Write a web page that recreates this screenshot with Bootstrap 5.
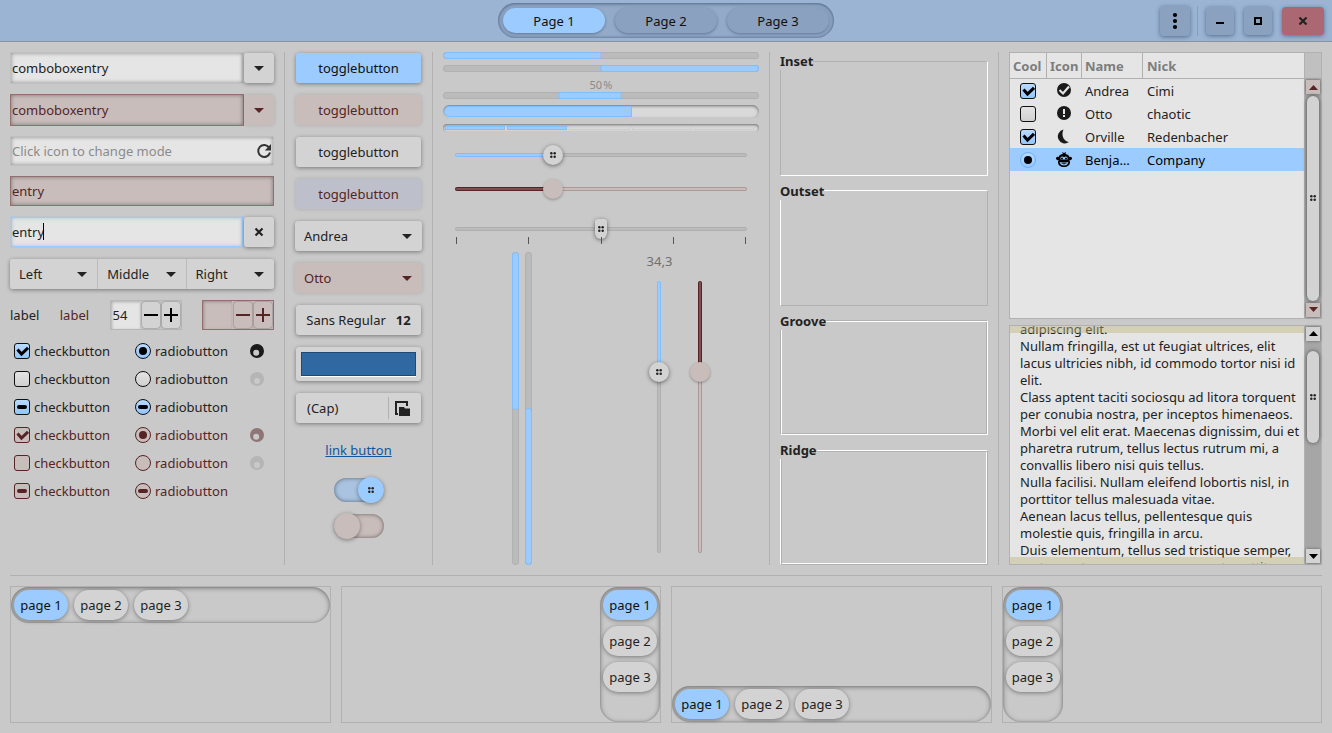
<!DOCTYPE html>
<html lang="en">
<head>
<meta charset="utf-8">
<meta name="viewport" content="width=device-width, initial-scale=1">
<title>Widget Factory</title>
<link href="https://cdn.jsdelivr.net/npm/bootstrap@5.3.0/dist/css/bootstrap.min.css" rel="stylesheet">
<style>
:root{--bg:#c9c9c9;--line:#b1b1b1;--acc:#9cccff;--accline:#80bfff;--base:#e5e5e5;--btn:#d3d3d3;--fg:#222;--dis:#c8bdbb;--disfg:#562424;--disline:#936f6f;
 --check:url("data:image/svg+xml,%3Csvg xmlns='http://www.w3.org/2000/svg' viewBox='0 0 14 14'%3E%3Cpath d='M2.500 5.500l4 4.500L13 3.800' fill='none' stroke='%23000' stroke-width='3'/%3E%3C/svg%3E");
 --checkoff:url("data:image/svg+xml,%3Csvg xmlns='http://www.w3.org/2000/svg' viewBox='0 0 14 14'%3E%3Cpath d='M2.500 5.500l4 4.500L13 3.800' fill='none' stroke='%23562424' stroke-width='3'/%3E%3C/svg%3E");
 --dash:url("data:image/svg+xml,%3Csvg xmlns='http://www.w3.org/2000/svg' viewBox='0 0 14 14'%3E%3Crect x='2' y='5' width='10' height='4' rx='2'/%3E%3C/svg%3E");
 --dashoff:url("data:image/svg+xml,%3Csvg xmlns='http://www.w3.org/2000/svg' viewBox='0 0 14 14'%3E%3Crect x='2' y='5' width='10' height='4' rx='2' fill='%23562424'/%3E%3C/svg%3E");
 --dot:url("data:image/svg+xml,%3Csvg xmlns='http://www.w3.org/2000/svg' viewBox='0 0 14 14'%3E%3Ccircle cx='7' cy='7' r='4'/%3E%3C/svg%3E");
 --dotoff:url("data:image/svg+xml,%3Csvg xmlns='http://www.w3.org/2000/svg' viewBox='0 0 14 14'%3E%3Ccircle cx='7' cy='7' r='4' fill='%23562424'/%3E%3C/svg%3E");
 --arrow:url("data:image/svg+xml,%3Csvg xmlns='http://www.w3.org/2000/svg' viewBox='0 0 10 5'%3E%3Cpath d='M0 0h10L5 5z' fill='%23222'/%3E%3C/svg%3E");
 --arrowoff:url("data:image/svg+xml,%3Csvg xmlns='http://www.w3.org/2000/svg' viewBox='0 0 10 5'%3E%3Cpath d='M0 0h10L5 5z' fill='%23562424'/%3E%3C/svg%3E");
 --grip:url("data:image/svg+xml,%3Csvg xmlns='http://www.w3.org/2000/svg' viewBox='0 0 6 6'%3E%3Cg fill='%23222'%3E%3Ccircle cx='1.300' cy='1.300' r='1.250'/%3E%3Ccircle cx='4.700' cy='1.300' r='1.250'/%3E%3Ccircle cx='1.300' cy='4.700' r='1.250'/%3E%3Ccircle cx='4.700' cy='4.700' r='1.250'/%3E%3C/g%3E%3C/svg%3E")}
body{font:13px/18px "Noto Sans",sans-serif;color:var(--fg);background:var(--bg)}
.page{min-height:100vh}
input,button,select,textarea{font:inherit;color:inherit}
svg{display:block}

/* title bar */
.titlebar{height:42px;background:#9bb4d4;border-bottom:1px solid #8d9299;display:grid;grid-template-columns:1fr auto 1fr;color:#101010}
.switcher{height:35px;padding:0 5px;gap:10px;border-radius:18px;background:#93abc9;box-shadow:inset 0 1px 4px rgba(30,50,80,.4),inset 0 0 2px 1px rgba(80,100,130,.4)}
.switcher .btn{width:102px;height:25px;padding:0;border:0;border-radius:13px;font:inherit;color:#101010;background:#8aa1bf;box-shadow:0 1px 3px rgba(30,50,80,.45)}
.switcher .btn.active{background:var(--acc)}
.winbtns{gap:10px;padding-right:8px}
.winbtns .btn{width:28px;height:28px;padding:0;border:0;border-radius:4px;color:#000;background:#8aa1bf;box-shadow:0 1px 4px rgba(20,40,70,.5);display:grid;place-items:center}
.winbtns .menubtn{width:30px;height:30px}
.winbtns .closebtn{width:42px;background:#ac6872;color:#222}
.vline{width:1px;background:var(--line)}
.winbtns .vline{height:30px;background:#869dbb;margin:0 -2px 0 -3px}

/* main grid */
.board{flex:1;display:grid;gap:10px;padding:10px;grid-template-columns:minmax(0,264fr) 1px minmax(0,127fr) 1px minmax(0,316fr) 1px minmax(0,208fr) 1px minmax(0,313fr);grid-template-rows:minmax(513px,1fr)}
.stack{display:flex;flex-direction:column;min-width:0}
.wbtn{height:30px;padding:0;border:0;border-radius:3px;background:var(--btn);color:var(--fg);font:inherit;box-shadow:0 1px 4px rgba(0,0,0,.4);display:flex;align-items:center;justify-content:center;white-space:nowrap}
.wbtn:hover{background:#dadada}
.wbtn.active{background:var(--acc);color:#101010}
.wbtn:disabled{opacity:1;background:var(--dis);color:var(--disfg);box-shadow:0 0 4px rgba(0,0,0,.15)}
.wbtn.active:disabled{background:#bdc0cb}
.entry{width:100%;min-width:0;height:30px;padding:0 1px;border:1px solid #c0c0c0;border-radius:0;background:var(--base);box-shadow:inset 0 0 4px rgba(0,0,0,.4)}
.entry::placeholder{color:#8b8b8b}
.entry.tall{height:32px}
.entry:disabled{background:var(--dis);color:var(--disfg);border-color:var(--disline);opacity:1}
.entry.focus{border-color:#bcc6d0;box-shadow:inset 0 0 0 1px var(--acc),inset 0 0 4px rgba(60,120,200,.5);outline:0}
.combo .wbtn{width:30px;flex:none}
.pick{appearance:none;width:100%;justify-content:start;padding:0 28px 0 9px;background:var(--btn) var(--arrow) no-repeat right 10px center/10px 5px}
.pick:disabled{background:var(--dis) var(--arrowoff) no-repeat right 10px center/10px 5px}
.trio .pick{border-radius:0;border-right:1px solid #bbb;box-shadow:none}
.trio .pick:first-child{border-radius:3px 0 0 3px}
.trio .pick:last-child{border-right:0;border-radius:0 3px 3px 0}
.trio{border-radius:3px;box-shadow:0 1px 4px rgba(0,0,0,.4);margin:1px 0}
.caret{position:absolute;left:33px;top:7px;width:1px;height:17px;background:#000}
.endicon{position:absolute;right:2px;top:7px}
.offtext{color:var(--disfg)}
.spin{height:30px;width:72px;padding:0 1px 0 0;border:1px solid #b8b8b8;background:var(--bg);gap:2px;align-items:center;display:flex}
.spin input{flex:1;min-width:0;height:28px;border:0;padding:0 2px;background:var(--base);box-shadow:inset 1px 1px 3px rgba(0,0,0,.25)}
.spin .wbtn{width:18px;height:26px;box-shadow:0 0 2px rgba(0,0,0,.5)}
.spin.off{background:var(--dis);border-color:var(--disline)}
.spin.off input{background:var(--dis)}
.tick{appearance:none;flex:none;width:16px;height:16px;margin:0;border:1px solid #111;border-radius:3px;background:linear-gradient(#e4e4e4,#d0d0d0)}
.tick[type=radio]{border-radius:50%}
.tick:checked,.tick.mixed{background:var(--dash) center/14px,linear-gradient(#b8daff,#93c6ff)}
.tick:checked{background-image:var(--check),linear-gradient(#b8daff,#93c6ff)}
.tick[type=radio]:checked{background-image:var(--dot),linear-gradient(#b8daff,#93c6ff)}
.tick:disabled{border-color:var(--disfg);background:var(--dis)}
.tick.mixed:disabled{background:var(--dashoff) center/14px,var(--dis)}
.tick:checked:disabled{background:var(--checkoff) center/14px,var(--dis)}
.tick[type=radio]:checked:disabled{background:var(--dotoff) center/14px,var(--dis)}
.tick.sel{border-color:#6cb0fb}
.checks{display:grid;grid-template-columns:121fr 114fr 25fr;row-gap:6px;padding-left:4px}
.checks label,.checks span{height:22px;display:flex;align-items:center;gap:4px}

/* buttons column */
.buttons{gap:12px;padding-top:1px}
.inset1{margin:0 1px}
.fontbtn{gap:5px;padding:0 11px}
.colorwell{width:100%;height:100%;border:1px solid #1f4a78;background:#3068a2;box-shadow:0 1px #fff;padding:0;appearance:none}
.colorwell::-webkit-color-swatch-wrapper{padding:0}
.colorwell::-webkit-color-swatch{border:0}
.linkbtn{height:30px;line-height:30px;color:#12559b}
.toggle{appearance:none;width:50px;height:24px;margin:1px auto;border-radius:12px;background:#a9c3e0;box-shadow:inset 0 0 4px rgba(0,0,0,.5);display:flex;align-items:center;justify-content:flex-end}
.toggle::before{content:"";width:26px;height:26px;flex:none;border-radius:50%;background:var(--grip) center/6px no-repeat var(--acc);box-shadow:0 1px 4px rgba(0,0,0,.4)}
.toggle:disabled{justify-content:flex-start;background:var(--dis)}
.toggle:disabled::before{background:var(--dis)}

/* bars and scales */
.bar7{height:7px;border:1px solid var(--line);background:#bbb;border-radius:3px;overflow:visible;font-size:inherit}
.bar7 .progress-bar{background:var(--acc);outline:1px solid var(--accline);border-radius:2px}
.bar7.upright{width:7px;height:auto;flex-direction:column}
.level{border-radius:7px;background:#d9d9d9;box-shadow:inset 0 1px 3px rgba(0,0,0,.5);padding:1px}
.level .fillbar{height:100%;background:var(--acc);border:1px solid var(--accline);border-radius:6px 0 0 6px}
.blocks{display:flex;gap:2px;padding:2px 5px 2px 2px}
.blocks i{flex:1;border:1px solid #cdcdcd}
.blocks i.on{background:var(--acc);border-color:var(--accline)}
.scale{--c:var(--acc);--cl:var(--accline);--t:#bbb;--tl:#afafaf;--dir:to right;appearance:none;background:none;width:100%;height:20px;margin:0;display:block}
.scale::-webkit-slider-runnable-track{box-sizing:border-box;height:4px;border:1px solid transparent;border-radius:2px;background:linear-gradient(var(--dir),var(--c) var(--fill),var(--t) var(--fill)) padding-box,linear-gradient(var(--dir),var(--cl) var(--fill),var(--tl) var(--fill)) border-box}
.scale::-webkit-slider-thumb{appearance:none;width:20px;height:20px;margin-top:-9px;border:0;border-radius:50%;background:var(--grip) center/6px no-repeat var(--btn);box-shadow:0 1px 4px rgba(0,0,0,.5)}
.scale:disabled{--c:#7a5050;--cl:#562424;--t:#c8bdbb;--tl:#ad9898}
.scale:disabled::-webkit-slider-thumb{background:var(--dis);box-shadow:0 1px 3px rgba(0,0,0,.3)}
.scale.marks::-webkit-slider-thumb{width:12px;border-radius:3px 3px 6px 6px}
.scale.tallscale{--dir:to bottom;writing-mode:vertical-lr;width:20px;height:auto;flex:1;min-height:0}
.scale.tallscale::-webkit-slider-runnable-track{width:4px;height:100%}
.scale.tallscale::-webkit-slider-thumb{margin:0 0 0 -9px}
.ticks{display:flex;justify-content:space-between;padding:0 1px}
.ticks i{width:1px;height:7px;background:#555}
.scales{gap:18px;padding:0 3px 12px 0}
.dim{color:#707070}
.tiny{font-size:11px;line-height:14px;color:#8a8a8a}

/* frames */
.frames{gap:6px}
.frames fieldset{flex:1;border:1px solid}
.frames legend{float:none;width:auto;margin:0 0 0 -1px;font-size:13px;line-height:18px;font-weight:700;background:var(--bg)}
.frames .f-in{border-color:var(--line) #fff #fff var(--line)}
.frames .f-out{border-color:#fff var(--line) var(--line) #fff}
.frames .f-groove{border-color:var(--line) #fff #fff var(--line);box-shadow:inset 1px 1px #fff,inset -1px -1px var(--line)}
.frames .f-ridge{border-color:#fff var(--line) var(--line) #fff;box-shadow:inset 1px 1px var(--line),inset -1px -1px #fff}

/* list and text */
.view{border:1px solid var(--line);background:var(--base);display:flex;min-height:0}
.people{table-layout:fixed;width:100%;margin:0;border-collapse:separate;border-spacing:0}
.people th{height:26px;padding:0 3px;border-right:1px solid var(--line);border-bottom:1px solid var(--line);color:#7d7d7d;font-weight:700;white-space:nowrap}
.people th:last-child{border-right:0;padding-left:4px}
.people td{height:23px;padding:0 10px 0 3px;line-height:18px;vertical-align:middle;white-space:nowrap;overflow:hidden;text-overflow:ellipsis}
.people td:nth-child(n+4){padding-left:4px}
.people tr.cur td{background:var(--acc);color:#000}
.people td .tick,.people td svg{display:block;margin:0 auto}
.people td:nth-child(-n+2){padding:0 1px 0 0}
.sbar{width:17px;flex:none;background:#a6a6a6;border-left:1px solid var(--line);padding:1px;display:flex;flex-direction:column;gap:1px}
.sbar .wbtn{width:14px;height:14px;flex:none;border-radius:0;box-shadow:0 0 3px rgba(0,0,0,.4)}
.trough{flex:1;display:flex;flex-direction:column;padding:1px}
.thumb{border-radius:6px;background:var(--grip) center/6px no-repeat var(--btn);box-shadow:0 0 4px rgba(0,0,0,.55)}
.stub{height:26px;background:#c0c0c0;border-left:1px solid var(--line);border-bottom:1px solid var(--line)}
.prose{flex:1;width:100%;min-width:0;resize:none;overflow:hidden;border:0;outline:0;background:none;padding:0 0 0 10px;line-height:17px;display:block}
.edge{position:absolute;left:0;right:0;height:7px;background:rgba(190,182,125,.45)}

/* notebooks */
.books{display:grid;grid-template-columns:repeat(4,minmax(0,1fr));gap:10px;margin:0 10px 10px;padding-top:10px;border-top:1px solid var(--line)}
.book{height:137px;border:1px solid var(--line);display:flex}
.tabs{padding:3px;gap:6px;display:flex;border-radius:18px;box-shadow:inset 0 1px 5px rgba(0,0,0,.42),inset 0 0 1px 1px rgba(0,0,0,.06)}
.tabs .wbtn{width:54px;border-radius:15px}
</style>
</head>
<body>
<div class="page d-flex flex-column">
<header class="titlebar align-items-center">
  <span></span>
  <nav class="switcher d-flex align-items-center" aria-label="Pages">
    <button class="btn active">Page 1</button><button class="btn">Page 2</button><button class="btn">Page 3</button>
  </nav>
  <div class="winbtns d-flex align-items-center justify-content-end">
    <button class="btn menubtn" aria-label="Menu"><svg width="6" height="18" viewBox="0 0 6 18"><circle cx="3" cy="3" r="2.1"/><circle cx="3" cy="9" r="2.1"/><circle cx="3" cy="15" r="2.1"/></svg></button>
    <span class="vline"></span>
    <button class="btn" aria-label="Minimize"><svg width="10" height="10"><path d="M1 6h8v2H1z"/></svg></button>
    <button class="btn" aria-label="Maximize"><svg width="10" height="10"><path d="M2 2h6v6H2z" fill="none" stroke="#000" stroke-width="2"/></svg></button>
    <button class="btn closebtn" aria-label="Close"><svg width="10" height="10"><path d="M1.5 1.5l7 7m0-7l-7 7" stroke="#222" stroke-width="2.2"/></svg></button>
  </div>
</header>

<main class="board">
  <section class="stack" style="gap:10px">
    <div class="combo d-flex align-items-center"><input class="entry tall" value="comboboxentry" aria-label="Combo entry"><button class="wbtn" aria-label="Open"><svg width="10" height="5"><path d="M0 0h10L5 5z" fill="#222"/></svg></button></div>
    <div class="combo d-flex align-items-center"><input class="entry tall" value="comboboxentry" disabled aria-label="Disabled combo entry"><button class="wbtn" disabled aria-label="Open"><svg width="10" height="5"><path d="M0 0h10L5 5z" fill="#562424"/></svg></button></div>
    <div class="position-relative"><input class="entry d-block" placeholder="Click icon to change mode" aria-label="Mode"><svg class="endicon" width="16" height="16" viewBox="0 0 16 16"><path d="M13.2 4.6A6 6 0 1 0 14 9.6" fill="none" stroke="#333" stroke-width="2"/><path d="M15 1v6.4H8.8z" fill="#333"/></svg></div>
    <input class="entry" value="entry" disabled aria-label="Disabled entry">
    <div class="combo d-flex align-items-center position-relative"><input class="entry tall focus" value="entry" aria-label="Entry"><span class="caret"></span><button class="wbtn" aria-label="Clear"><svg width="10" height="10"><path d="M1.5 1.5l7 7m0-7l-7 7" stroke="#222" stroke-width="2.2"/></svg></button></div>
    <div class="trio d-flex">
      <select class="wbtn pick" aria-label="Left"><option>Left</option></select><select class="wbtn pick" aria-label="Middle"><option>Middle</option></select><select class="wbtn pick" aria-label="Right"><option>Right</option></select>
    </div>
    <div class="d-flex align-items-center justify-content-between">
      <label for="sp1">label</label><label for="sp2" class="offtext">label</label>
      <div class="spin"><input id="sp1" value="54"><button class="wbtn" aria-label="Less"><svg width="14" height="14"><path d="M0 6h14v2H0z"/></svg></button><button class="wbtn" aria-label="More"><svg width="14" height="14"><path d="M0 6h14v2H0zM6 0h2v14H6z"/></svg></button></div>
      <div class="spin off"><input id="sp2" disabled><button class="wbtn" disabled aria-label="Less"><svg width="14" height="14" fill="#562424"><path d="M0 6h14v2H0z"/></svg></button><button class="wbtn" disabled aria-label="More"><svg width="14" height="14" fill="#562424"><path d="M0 6h14v2H0zM6 0h2v14H6z"/></svg></button></div>
    </div>
    <div class="checks">
      <label><input class="tick" type="checkbox" checked>checkbutton</label><label><input class="tick" type="radio" name="a" checked>radiobutton</label><span><svg width="16" height="16" fill="#1a1a1a"><path fill-rule="evenodd" d="M8 1a7 7 0 1 0 0 14A7 7 0 0 0 8 1zM7.2 6.8a3 3 0 1 1 0 6 3 3 0 0 1 0-6z"/></svg></span>
      <label><input class="tick" type="checkbox">checkbutton</label><label><input class="tick" type="radio" name="a">radiobutton</label><span><svg width="16" height="16" fill="#b5b5b5"><path fill-rule="evenodd" d="M8 1a7 7 0 1 0 0 14A7 7 0 0 0 8 1zM8 7a3 3 0 1 1 0 6 3 3 0 0 1 0-6z"/></svg></span>
      <label><input class="tick mixed" type="checkbox">checkbutton</label><label><input class="tick mixed" type="radio" name="b">radiobutton</label><span></span>
      <label class="offtext"><input class="tick" type="checkbox" checked disabled>checkbutton</label><label class="offtext"><input class="tick" type="radio" name="c" checked disabled>radiobutton</label><span><svg width="16" height="16" fill="#8f7575"><path fill-rule="evenodd" d="M8 1a7 7 0 1 0 0 14A7 7 0 0 0 8 1zM7.2 6.8a3 3 0 1 1 0 6 3 3 0 0 1 0-6z"/></svg></span>
      <label class="offtext"><input class="tick" type="checkbox" disabled>checkbutton</label><label class="offtext"><input class="tick" type="radio" name="c" disabled>radiobutton</label><span><svg width="16" height="16" fill="#b5b5b5"><path fill-rule="evenodd" d="M8 1a7 7 0 1 0 0 14A7 7 0 0 0 8 1zM8 7a3 3 0 1 1 0 6 3 3 0 0 1 0-6z"/></svg></span>
      <label class="offtext"><input class="tick mixed" type="checkbox" disabled>checkbutton</label><label class="offtext"><input class="tick mixed" type="radio" name="d" disabled>radiobutton</label><span></span>
    </div>
  </section>
  <span class="vline"></span>

  <section class="stack buttons">
    <button class="wbtn inset1 active">togglebutton</button>
    <button class="wbtn inset1" disabled>togglebutton</button>
    <button class="wbtn inset1">togglebutton</button>
    <button class="wbtn inset1 active" disabled>togglebutton</button>
    <select class="wbtn pick" aria-label="Name"><option>Andrea</option></select>
    <select class="wbtn pick" disabled aria-label="Disabled name"><option>Otto</option></select>
    <button class="wbtn inset1 fontbtn"><span>Sans Regular</span><span class="vline align-self-stretch my-1"></span><b>12</b></button>
    <div class="wbtn inset1" style="height:34px;padding:5px"><input class="colorwell" type="color" value="#3068a2" aria-label="Colour"></div>
    <button class="wbtn inset1 fontbtn"><span class="flex-fill text-start">(Cap)</span><span class="vline align-self-stretch my-1"></span><svg width="16" height="16" fill="#222"><path d="M1 1h13v5h-2V3H3v10h1v2H1z"/><path d="M5 7h5l1 1.500h5V16H5z"/></svg></button>
    <a href="#" class="linkbtn text-center">link button</a>
    <div class="stack" style="gap:10px"><input class="toggle" type="checkbox" role="switch" checked aria-label="Switch"><input class="toggle" type="checkbox" role="switch" disabled aria-label="Disabled switch"></div>
  </section>
  <span class="vline"></span>

  <section class="stack">
    <div class="progress bar7"><div class="progress-bar" style="width:50%"></div></div>
    <div class="progress bar7" style="margin-top:6px"><div class="progress-bar ms-auto" style="width:50%"></div></div>
    <div class="text-center tiny" style="margin:6px 0 0">50&#8202;%</div>
    <div class="progress bar7"><div class="progress-bar" style="width:20%;margin-left:36.5%"></div></div>
    <div class="level" style="height:13px;margin-top:6px"><div class="fillbar" style="width:60%"></div></div>
    <div class="level blocks" style="height:8px;margin-top:6px"><i class="on"></i><i class="on"></i><i></i><i></i><i></i></div>
    <div style="padding:13px 12px 0" class="stack">
      <input class="scale" type="range" min="0" max="272" value="88" style="--fill:33.5%" aria-label="Scale">
      <input class="scale" type="range" min="0" max="272" value="88" disabled style="--fill:33.5%;margin-top:14px" aria-label="Disabled scale">
      <input class="scale marks" type="range" style="--fill:0%;margin-top:20px" aria-label="Scale with marks">
      <div class="ticks" style="margin-top:-2px"><i></i><i></i><i></i><i></i><i></i></div>
    </div>
    <div class="d-flex flex-fill" style="margin-top:8px">
      <div class="d-flex w-50 justify-content-center" style="gap:6px">
        <div class="progress bar7 upright"><div class="progress-bar w-100" style="height:50%"></div></div>
        <div class="progress bar7 upright"><div class="progress-bar w-100 mt-auto" style="height:50%"></div></div>
      </div>
      <div class="scales d-flex w-50 justify-content-center">
        <div class="d-flex flex-column align-items-center dim" style="gap:11px"><label for="vs1">34,3</label><input id="vs1" class="scale tallscale" type="range" min="0" max="1000" value="321" style="--fill:33.5%"></div>
        <div class="d-flex flex-column" style="padding-top:29px"><input class="scale tallscale" type="range" min="0" max="1000" value="321" disabled style="--fill:33.5%" aria-label="Disabled vertical scale"></div>
      </div>
    </div>
  </section>
  <span class="vline"></span>

  <section class="stack frames">
    <fieldset class="f-in"><legend>Inset</legend></fieldset>
    <fieldset class="f-out"><legend>Outset</legend></fieldset>
    <fieldset class="f-groove"><legend>Groove</legend></fieldset>
    <fieldset class="f-ridge"><legend>Ridge</legend></fieldset>
  </section>
  <span class="vline"></span>

  <section class="stack" style="gap:6px">
    <div class="view" style="flex:267 1 0">
      <div class="flex-fill">
      <table class="people">
        <colgroup><col style="width:37px"><col style="width:35px"><col style="width:61px"><col></colgroup>
        <thead><tr><th>Cool</th><th>Icon</th><th>Name</th><th>Nick</th></tr></thead>
        <tbody>
          <tr><td><input class="tick" type="checkbox" checked aria-label="Andrea cool"></td><td><svg width="16" height="16"><circle cx="8" cy="7" r="7" fill="#1a1a1a"/><path d="M3.500 7l3.500 3.500L13 3.500" fill="none" stroke="#e5e5e5" stroke-width="2.2"/></svg></td><td>Andrea</td><td>Cimi</td></tr>
          <tr><td><input class="tick" type="checkbox" aria-label="Otto cool"></td><td><svg width="16" height="16"><circle cx="8" cy="7" r="7" fill="#1a1a1a"/><path d="M7 3h2v5H7zM7 9h2v2H7z" fill="#e5e5e5"/></svg></td><td>Otto</td><td>chaotic</td></tr>
          <tr><td><input class="tick" type="checkbox" checked aria-label="Orville cool"></td><td><svg width="16" height="16"><path d="M7.500 .5a7 7 0 1 0 5.500 12.500C8.500 12.800 4.500 7 7.500 .5z" fill="#1a1a1a"/></svg></td><td>Orville</td><td>Redenbacher</td></tr>
          <tr class="cur"><td><input class="tick sel" type="radio" checked aria-label="Benjamin cool"></td><td><svg width="16" height="16"><path d="M7 2L6 0l2 1 2-1-.5 2C12 2.300 13 3.500 13.300 5c1.800-.5 2.700.5 2.700 1.500S15 8.500 13.300 8c.5.7.7 1.300.7 2.200C14 13 11.500 15 8 15s-6-2-6-4.800c0-.9.2-1.500.7-2.200C1 8.500 0 7.500 0 6.500S.9 4.500 2.700 5C3 3.300 4.500 2.200 7 2z"/><path d="M4.500 5.500q1.500-2 3.500-.3 2-1.700 3.500.3v2h-7z" fill="#9cccff"/><circle cx="6" cy="6.500" r="1"/><circle cx="10" cy="6.500" r="1"/><path d="M3.500 10q4.500 1 9 0-1 3.500-4.500 3.500T3.500 10z" fill="#9cccff"/><path d="M5 11.300h6l-3 1.200z"/></svg></td><td>Benjamin</td><td>Company</td></tr>
        </tbody>
      </table>
      </div>
      <div class="d-flex flex-column">
        <div class="stub"></div>
        <div class="sbar flex-fill"><button class="wbtn" disabled aria-label="Up"><svg width="9" height="5"><path d="M0 5h9L4.500 0z" fill="#562424"/></svg></button><div class="trough"><div class="thumb flex-fill"></div></div><button class="wbtn" disabled aria-label="Down"><svg width="9" height="5"><path d="M0 0h9L4.500 5z" fill="#562424"/></svg></button></div>
      </div>
    </div>
    <div class="view" style="flex:240 1 0">
      <div class="position-relative flex-fill d-flex overflow-hidden">
      <textarea class="prose" id="prose" spellcheck="false" aria-label="Text">Lorem ipsum dolor sit amet, consectetuer adipiscing elit.
Nullam fringilla, est ut feugiat ultrices, elit lacus ultricies nibh, id commodo tortor nisi id elit.
Class aptent taciti sociosqu ad litora torquent per conubia nostra, per inceptos himenaeos.
Morbi vel elit erat. Maecenas dignissim, dui et pharetra rutrum, tellus lectus rutrum mi, a convallis libero nisi quis tellus.
Nulla facilisi. Nullam eleifend lobortis nisl, in porttitor tellus malesuada vitae.
Aenean lacus tellus, pellentesque quis molestie quis, fringilla in arcu.
Duis elementum, tellus sed tristique semper, metus metus accumsan augue, et porttitor augue orci a libero.</textarea>
      <span class="edge" style="top:0"></span><span class="edge" style="bottom:0"></span>
      </div>
      <div class="sbar"><button class="wbtn" aria-label="Up"><svg width="9" height="5"><path d="M0 5h9L4.500 0z"/></svg></button><div class="trough"><div class="thumb" style="height:45%;margin-top:8px"></div></div><button class="wbtn" aria-label="Down"><svg width="9" height="5"><path d="M0 0h9L4.500 5z"/></svg></button></div>
    </div>
  </section>
</main>

<footer class="books">
  <div class="book flex-column"><div class="tabs"><button class="wbtn active">page 1</button><button class="wbtn">page 2</button><button class="wbtn">page 3</button></div></div>
  <div class="book justify-content-end"><div class="tabs flex-column"><button class="wbtn active">page 1</button><button class="wbtn">page 2</button><button class="wbtn">page 3</button></div></div>
  <div class="book flex-column justify-content-end"><div class="tabs"><button class="wbtn active">page 1</button><button class="wbtn">page 2</button><button class="wbtn">page 3</button></div></div>
  <div class="book"><div class="tabs flex-column"><button class="wbtn active">page 1</button><button class="wbtn">page 2</button><button class="wbtn">page 3</button></div></div>
</footer>
</div>
<script src="https://cdn.jsdelivr.net/npm/bootstrap@5.3.0/dist/js/bootstrap.bundle.min.js"></script>
<script>
document.getElementById('prose').scrollTop = 22;
</script>
</body>
</html>
